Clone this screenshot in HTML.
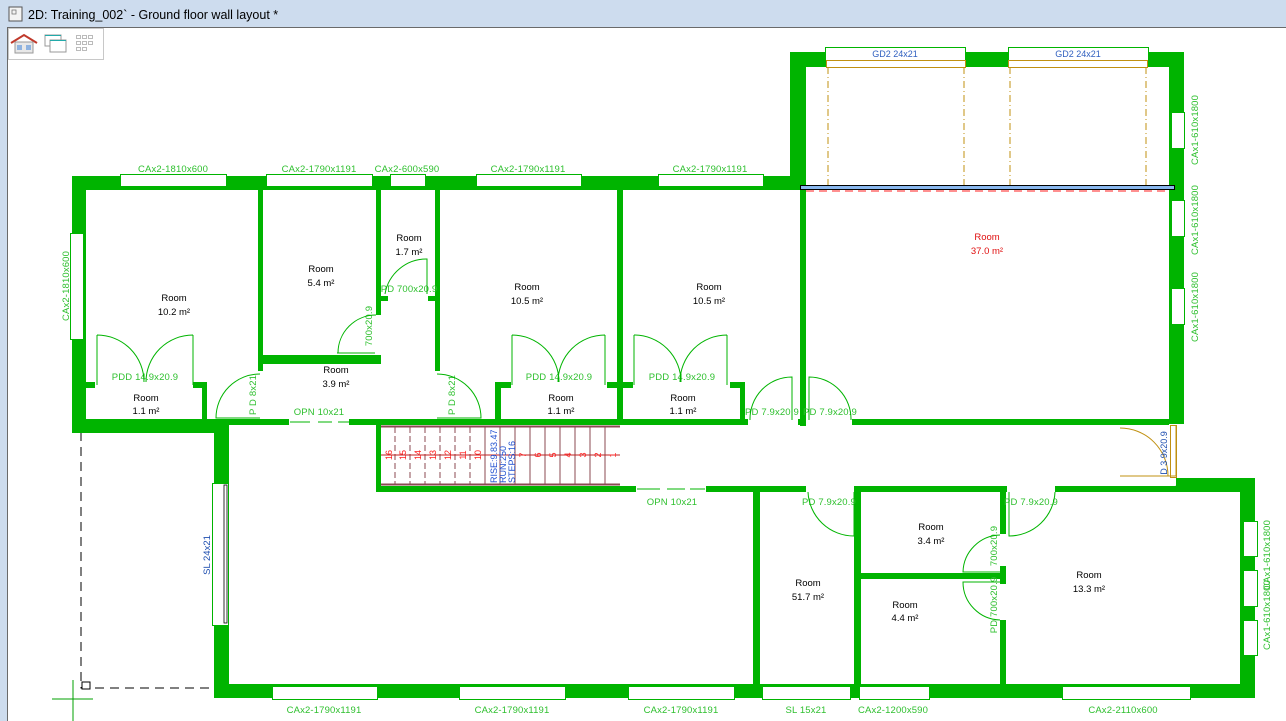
<!DOCTYPE html>
<html><head><meta charset="utf-8"><style>
html,body{margin:0;padding:0;width:1286px;height:721px;overflow:hidden;background:#fff}
svg{display:block}
text{font-family:"Liberation Sans",Arial,sans-serif}
.g{fill:#00b400}
.win{fill:#fff;stroke:#00b400;stroke-width:1}
.lbl{fill:#2fc02f;font-size:9.5px;letter-spacing:0.15px}
.rm{fill:#000;font-size:9.5px;text-anchor:middle}
.dr{fill:none;stroke:#00b400;stroke-width:1}
.st{stroke:#8b4a52;stroke-width:1}
.sn{fill:#ff2020;font-size:9px}
</style></head><body>
<svg width="1286" height="721" viewBox="0 0 1286 721" xmlns="http://www.w3.org/2000/svg">
<rect x="0" y="0" width="1286" height="27" fill="#cddcee"/>
<rect x="0" y="27" width="7" height="694" fill="#cddcee"/>
<rect x="7" y="27" width="1279" height="694" fill="#fff"/>
<line x1="7.5" y1="27" x2="7.5" y2="721" stroke="#6a6a6a"/>
<line x1="7" y1="27.5" x2="1286" y2="27.5" stroke="#6a6a6a"/>
<rect x="9" y="7" width="13" height="14" fill="#f4f4f4" stroke="#555"/>
<rect x="12" y="10" width="4" height="4" fill="none" stroke="#777" stroke-width="0.8"/>
<text x="28" y="19" font-size="12.5" fill="#000">2D: Training_002` - Ground floor wall layout *</text>
<rect x="8.5" y="28.5" width="95" height="31" fill="#fff" stroke="#c8c8c8"/>
<path d="M11 43 L24 35 L37 43" fill="none" stroke="#c0392b" stroke-width="2"/>
<rect x="15" y="42" width="18" height="11" fill="#e8e8e8" stroke="#999"/>
<rect x="17" y="45" width="5" height="5" fill="#8fb3e0"/><rect x="26" y="45" width="5" height="5" fill="#8fb3e0"/>
<rect x="45" y="35" width="16" height="11" fill="#fff" stroke="#999"/><line x1="45" y1="35.5" x2="61" y2="35.5" stroke="#2aa"/>
<rect x="50" y="40" width="16" height="12" fill="#fff" stroke="#999"/><line x1="50" y1="40.5" x2="66" y2="40.5" stroke="#2aa"/>
<g fill="none" stroke="#bbb"><rect x="76.5" y="35.5" width="4" height="3"/><rect x="82.5" y="35.5" width="4" height="3"/><rect x="88.5" y="35.5" width="4" height="3"/><rect x="76.5" y="41.5" width="4" height="3"/><rect x="82.5" y="41.5" width="4" height="3"/><rect x="88.5" y="41.5" width="4" height="3"/><rect x="76.5" y="47.5" width="4" height="3"/><rect x="82.5" y="47.5" width="4" height="3"/></g>

<path d="M81 432 V688 H224" fill="none" stroke="#000" stroke-dasharray="9,6" stroke-width="1"/>
<rect x="82" y="682" width="8" height="7" fill="#fff" stroke="#000"/>
<path d="M52 699 H93 M73 680 V721" stroke="#00a000" stroke-width="1"/>

<g class="g">
<rect x="72" y="176" width="734" height="14"/>
<rect x="72" y="176" width="14" height="257"/>
<rect x="72" y="419" width="157" height="14"/>
<rect x="207" y="419" width="962" height="6"/>
<rect x="790" y="52" width="16" height="138"/>
<rect x="790" y="52" width="394" height="15"/>
<rect x="1169" y="52" width="15" height="372"/>
<rect x="800" y="186" width="6" height="240"/>
<rect x="214" y="419" width="15" height="279"/>
<rect x="214" y="684" width="1041" height="14"/>
<rect x="376" y="425" width="5" height="66"/>
<rect x="376" y="486" width="864" height="6"/>
<rect x="1176" y="478" width="79" height="14"/>
<rect x="1240" y="478" width="15" height="220"/>
<rect x="258" y="190" width="5" height="181"/>
<rect x="258" y="355" width="123" height="9"/>
<rect x="376" y="190" width="5" height="125"/>
<rect x="435" y="190" width="5" height="181"/>
<rect x="381" y="296" width="7" height="5"/><rect x="428" y="296" width="7" height="5"/>
<rect x="617" y="190" width="6" height="235"/>
<rect x="86" y="382" width="9" height="6"/>
<rect x="193" y="382" width="14" height="6"/><rect x="202" y="382" width="5" height="40"/>
<rect x="495" y="382" width="6" height="40"/><rect x="501" y="382" width="10" height="6"/>
<rect x="607" y="382" width="10" height="6"/><rect x="623" y="382" width="10" height="6"/>
<rect x="730" y="382" width="15" height="6"/><rect x="740" y="382" width="5" height="40"/>
<rect x="753" y="492" width="7" height="193"/>
<rect x="854" y="492" width="7" height="193"/>
<rect x="861" y="573" width="145" height="6"/>
<rect x="1000" y="492" width="6" height="42"/>
<rect x="1000" y="620" width="6" height="65"/>
<rect x="1000" y="566" width="6" height="18"/>
</g>
<polygon points="1169,492 1184,478 1184,492" fill="#00b400"/>
<g fill="#fff">
<rect x="289" y="419" width="60" height="6"/>
<rect x="748" y="419" width="50" height="6"/><rect x="806" y="419" width="46" height="6"/>
<rect x="636" y="486" width="70" height="6"/>
<rect x="806" y="486" width="48" height="6"/><rect x="1007" y="486" width="48" height="6"/>
</g>
<path d="M290 422 H310 M318 422 H332 M338 422 H349 M637 489 H660 M667 489 H685 M690 489 H705" stroke="#00b400"/>

<rect class="win" x="825.5" y="47.5" width="140" height="13"/>
<rect class="win" x="1008.5" y="47.5" width="140" height="13"/>
<rect x="826.5" y="60.5" width="139" height="7" fill="#fff" stroke="#c09010"/>
<rect x="1008.5" y="60.5" width="139" height="7" fill="#fff" stroke="#c09010"/>
<path d="M828 67 V191 M964 67 V191 M1010 67 V191 M1146 67 V191" stroke="#c09010" stroke-dasharray="7,3,1,3"/>
<text x="895" y="57" font-size="9" fill="#3060c0" text-anchor="middle">GD2 24x21</text>
<text x="1078" y="57" font-size="9" fill="#3060c0" text-anchor="middle">GD2 24x21</text>
<rect x="800.5" y="185.5" width="374" height="4" fill="#8ab8ef" stroke="#000"/>
<path d="M806 191 H1170" stroke="#ff2020" stroke-dasharray="8,5"/>

<g class="win">
<rect x="120.5" y="174.5" width="106" height="12"/>
<rect x="266.5" y="174.5" width="106" height="12"/>
<rect x="390.5" y="174.5" width="35" height="12"/>
<rect x="476.5" y="174.5" width="105" height="12"/>
<rect x="658.5" y="174.5" width="105" height="12"/>
<rect x="70.5" y="233.5" width="13" height="106"/>
<rect x="1171.5" y="112.5" width="13" height="36"/>
<rect x="1171.5" y="200.5" width="13" height="36"/>
<rect x="1171.5" y="288.5" width="13" height="36"/>
<rect x="1243.5" y="521.5" width="14" height="35"/>
<rect x="1243.5" y="570.5" width="14" height="36"/>
<rect x="1243.5" y="620.5" width="14" height="35"/>
<rect x="272.5" y="686.5" width="105" height="13"/>
<rect x="459.5" y="686.5" width="106" height="13"/>
<rect x="628.5" y="686.5" width="106" height="13"/>
<rect x="762.5" y="686.5" width="88" height="13"/>
<rect x="859.5" y="686.5" width="70" height="13"/>
<rect x="1062.5" y="686.5" width="128" height="13"/>
<rect x="212.5" y="483.5" width="16" height="142"/>
</g>
<rect x="224" y="485" width="3" height="138" fill="#fff" stroke="#000" stroke-width="0.8"/>
<g class="lbl">
<text x="173" y="172" text-anchor="middle">CAx2-1810x600</text>
<text x="319" y="172" text-anchor="middle">CAx2-1790x1191</text>
<text x="407" y="172" text-anchor="middle">CAx2-600x590</text>
<text x="528" y="172" text-anchor="middle">CAx2-1790x1191</text>
<text x="710" y="172" text-anchor="middle">CAx2-1790x1191</text>
<text transform="translate(69,286) rotate(-90)" text-anchor="middle">CAx2-1810x600</text>
<text transform="translate(1198,130) rotate(-90)" text-anchor="middle">CAx1-610x1800</text>
<text transform="translate(1198,220) rotate(-90)" text-anchor="middle">CAx1-610x1800</text>
<text transform="translate(1198,307) rotate(-90)" text-anchor="middle">CAx1-610x1800</text>
<text transform="translate(1270,555) rotate(-90)" text-anchor="middle">CAx1-610x1800</text>
<text transform="translate(1270,615) rotate(-90)" text-anchor="middle">CAx1-610x1800</text>
<text x="324" y="713" text-anchor="middle">CAx2-1790x1191</text>
<text x="512" y="713" text-anchor="middle">CAx2-1790x1191</text>
<text x="681" y="713" text-anchor="middle">CAx2-1790x1191</text>
<text x="806" y="713" text-anchor="middle">SL 15x21</text>
<text x="893" y="713" text-anchor="middle">CAx2-1200x590</text>
<text x="1123" y="713" text-anchor="middle">CAx2-2110x600</text>
<text x="145" y="380" text-anchor="middle">PDD 14.9x20.9</text>
<text x="559" y="380" text-anchor="middle">PDD 14.9x20.9</text>
<text x="682" y="380" text-anchor="middle">PDD 14.9x20.9</text>
<text x="409" y="292" text-anchor="middle">PD 700x20.9</text>
<text x="319" y="415" text-anchor="middle">OPN 10x21</text>
<text x="672" y="505" text-anchor="middle">OPN 10x21</text>
<text x="772" y="415" text-anchor="middle">PD 7.9x20.9</text>
<text x="830" y="415" text-anchor="middle">PD 7.9x20.9</text>
<text x="829" y="505" text-anchor="middle">PD 7.9x20.9</text>
<text x="1031" y="505" text-anchor="middle">PD 7.9x20.9</text>
<text transform="translate(372,326) rotate(-90)" text-anchor="middle">700x20.9</text>
<text transform="translate(256,395) rotate(-90)" text-anchor="middle">P D 8x21</text>
<text transform="translate(455,395) rotate(-90)" text-anchor="middle">P D 8x21</text>
<text transform="translate(997,546) rotate(-90)" text-anchor="middle">700x20.9</text>
<text transform="translate(997,605) rotate(-90)" text-anchor="middle">PD 700x20.9</text>
</g>
<text transform="translate(210,555) rotate(-90)" font-size="9.5" fill="#2050b0" text-anchor="middle">SL 24x21</text>

<g class="dr">
<path d="M97 385 V335 M97 335 A47 47 0 0 1 144 382"/>
<path d="M193 385 V335 M193 335 A47 47 0 0 0 146 382"/>
<path d="M512 385 V335 M512 335 A47 47 0 0 1 559 382"/>
<path d="M605 385 V335 M605 335 A47 47 0 0 0 558 382"/>
<path d="M634 385 V335 M634 335 A47 47 0 0 1 681 382"/>
<path d="M727 385 V335 M727 335 A47 47 0 0 0 680 382"/>
<path d="M260 374 A44 44 0 0 0 216 418 H260"/>
<path d="M437 374 A44 44 0 0 1 481 418 H437"/>
<path d="M385 294 A42 42 0 0 1 427 259 V294"/>
<path d="M375 353 H337"/>
<path d="M376 315 A38 38 0 0 0 338 353"/>
<path d="M750 420 A42 42 0 0 1 792 377 V420"/>
<path d="M851 420 A42 42 0 0 0 809 377 V420"/>
<path d="M808 492 A46 46 0 0 0 854 536 V492"/>
<path d="M1055 492 A46 46 0 0 1 1009 536 V492"/>
<path d="M1000 535 A38 38 0 0 0 963 572 H1000"/>
<path d="M1000 620 A38 38 0 0 1 963 582 H1000"/>
</g>
<path d="M1168 476 A48 48 0 0 0 1120 428 M1120 476 H1176 V425" fill="none" stroke="#c09010"/>
<rect x="1170.5" y="425.5" width="6" height="52" fill="none" stroke="#c09010"/>
<text transform="translate(1167,453) rotate(-90)" font-size="9" fill="#2050b0" text-anchor="middle">D 3 9x20.9</text>

<rect x="381" y="426" width="239" height="59" fill="#fff"/>
<path d="M381 426.5 H620 M381 484.5 H620" stroke="#8b4a52" stroke-width="2"/>
<g class="st">
<path d="M395 427 V484 M410 427 V484 M425 427 V484 M440 427 V484 M455 427 V484 M470 427 V484" stroke-dasharray="6,3"/>
<path d="M485 427 V484 M500 427 V484 M515 427 V484 M530 427 V484 M545 427 V484 M560 427 V484 M575 427 V484 M590 427 V484 M605 427 V484"/>
<path d="M381 455 H620" stroke="#c02020"/>
</g>
<g class="sn">
<text transform="translate(392,455) rotate(-90)" text-anchor="middle">16</text>
<text transform="translate(406,455) rotate(-90)" text-anchor="middle">15</text>
<text transform="translate(421,455) rotate(-90)" text-anchor="middle">14</text>
<text transform="translate(436,455) rotate(-90)" text-anchor="middle">13</text>
<text transform="translate(451,455) rotate(-90)" text-anchor="middle">12</text>
<text transform="translate(466,455) rotate(-90)" text-anchor="middle">11</text>
<text transform="translate(481,455) rotate(-90)" text-anchor="middle">10</text>
<text transform="translate(526,455) rotate(-90)" text-anchor="middle">7</text>
<text transform="translate(541,455) rotate(-90)" text-anchor="middle">6</text>
<text transform="translate(556,455) rotate(-90)" text-anchor="middle">5</text>
<text transform="translate(571,455) rotate(-90)" text-anchor="middle">4</text>
<text transform="translate(586,455) rotate(-90)" text-anchor="middle">3</text>
<text transform="translate(601,455) rotate(-90)" text-anchor="middle">2</text>
<text transform="translate(616,455) rotate(-90)" text-anchor="middle">1</text>
</g>
<g font-size="9" fill="#2050d0">
<text transform="translate(497,483) rotate(-90)">RISE:9.83.47</text>
<text transform="translate(506,483) rotate(-90)">RUN:250</text>
<text transform="translate(515,483) rotate(-90)">STEPS:16</text>
</g>

<g class="rm">
<text x="174" y="301">Room</text><text x="174" y="315">10.2 m²</text>
<text x="321" y="272">Room</text><text x="321" y="286">5.4 m²</text>
<text x="409" y="241">Room</text><text x="409" y="255">1.7 m²</text>
<text x="527" y="290">Room</text><text x="527" y="304">10.5 m²</text>
<text x="709" y="290">Room</text><text x="709" y="304">10.5 m²</text>
<text x="987" y="240" fill="#e01010">Room</text><text x="987" y="254" fill="#e01010">37.0 m²</text>
<text x="146" y="401">Room</text><text x="146" y="414">1.1 m²</text>
<text x="336" y="373">Room</text><text x="336" y="387">3.9 m²</text>
<text x="561" y="401">Room</text><text x="561" y="414">1.1 m²</text>
<text x="683" y="401">Room</text><text x="683" y="414">1.1 m²</text>
<text x="808" y="586">Room</text><text x="808" y="600">51.7 m²</text>
<text x="931" y="530">Room</text><text x="931" y="544">3.4 m²</text>
<text x="905" y="608">Room</text><text x="905" y="621">4.4 m²</text>
<text x="1089" y="578">Room</text><text x="1089" y="592">13.3 m²</text>
</g>
</svg>
</body></html>
